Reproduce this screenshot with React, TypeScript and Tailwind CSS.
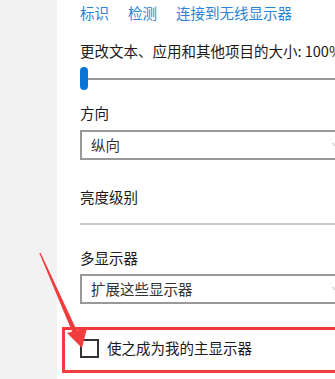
import { ChevronDown } from 'lucide-react'

const FONT = { fontFamily: '"Noto Sans CJK SC", "Noto Sans", sans-serif' }

function Dropdown({ value }: { value: string }) {
  return (
    <div className="flex h-[30px] w-[290px] shrink-0 items-center border-2 border-[#999999] bg-white pl-[9px]">
      <span className="w-[238px] shrink-0 text-[14.5px] leading-[20px] text-[#333333]">{value}</span>
      <ChevronDown className="h-[14px] w-[14px] shrink-0 text-[#888888]" strokeWidth={1.2} />
    </div>
  )
}

export default function App() {
  return (
    <div className="relative flex h-[379px] w-[335px] overflow-hidden bg-white" style={FONT}>
      {/* side strip */}
      <div className="w-[57px] shrink-0 bg-[#f2f2f2]" />

      {/* settings pane */}
      <div className="flex min-w-0 flex-1 flex-col overflow-hidden pl-[23px] text-[14.5px] leading-[20px] text-[#1a1a1a]">
        <div className="mt-[3px] flex gap-[19px] whitespace-nowrap text-[#2b84d6]">
          <span>标识</span>
          <span>检测</span>
          <span>连接到无线显示器</span>
        </div>

        <div className="mt-[18px] whitespace-nowrap">更改文本、应用和其他项目的大小: 100%</div>

        {/* slider */}
        <div className="mt-[6px] flex h-[23px] items-center">
          <div className="h-[23px] w-[8px] shrink-0 rounded-full bg-[#0a74d6]" />
          <div className="h-[2px] flex-1 bg-[#999999]" />
        </div>

        <div className="mt-[13px]">方向</div>
        <div className="mt-[7px]">
          <Dropdown value="纵向" />
        </div>

        <div className="mt-[27px]">亮度级别</div>
        <div className="mt-[16px] h-[2px] w-[300px] bg-[#cccccc]" />

        <div className="mt-[23px]">多显示器</div>
        <div className="mt-[6px]">
          <Dropdown value="扩展这些显示器" />
        </div>

        <label className="mt-[34px] flex items-center gap-[8px] whitespace-nowrap">
          <span className="h-[19px] w-[19px] shrink-0 border-2 border-[#333333] bg-white" />
          <span className="text-[#1a1a1a]">使之成为我的主显示器</span>
        </label>
      </div>

      {/* red annotation box */}
      <div className="absolute left-[62px] top-[327px] h-[46px] w-[300px] border-[3px] border-[#f03c3c]" />

      {/* red annotation arrow */}
      <svg className="absolute left-0 top-0" width="335" height="379" viewBox="0 0 335 379">
        <polygon points="39.3,253 40.7,253 78,333 73.5,335" fill="#f03c3c" />
        <polygon points="82,348 67,333 87,328" fill="#f03c3c" />
      </svg>
    </div>
  )
}
